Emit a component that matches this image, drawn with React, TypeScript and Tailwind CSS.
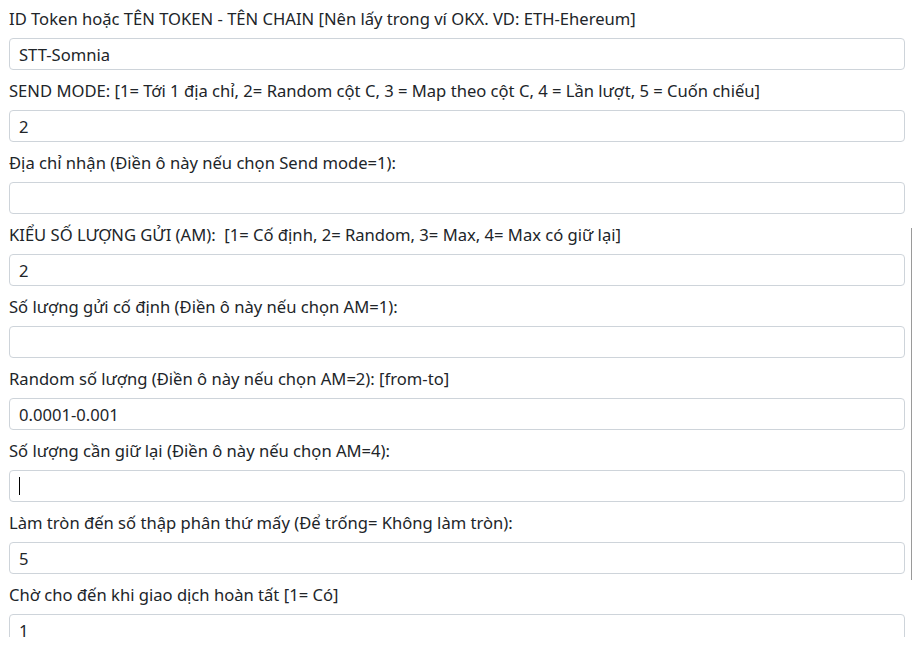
import React from "react";

const fields: { label: string; value: string; caret?: boolean }[] = [
  { label: "ID Token hoặc TÊN TOKEN - TÊN CHAIN [Nên lấy trong ví OKX. VD: ETH-Ehereum]", value: "STT-Somnia" },
  { label: "SEND MODE: [1= Tới 1 địa chỉ, 2= Random cột C, 3 = Map theo cột C, 4 = Lần lượt, 5 = Cuốn chiếu]", value: "2" },
  { label: "Địa chỉ nhận (Điền ô này nếu chọn Send mode=1):", value: "" },
  { label: "KIỂU SỐ LƯỢNG GỬI (AM):\u00a0 [1= Cố định, 2= Random, 3= Max, 4= Max có giữ lại]", value: "2" },
  { label: "Số lượng gửi cố định (Điền ô này nếu chọn AM=1):", value: "" },
  { label: "Random số lượng (Điền ô này nếu chọn AM=2): [from-to]", value: "0.0001-0.001" },
  { label: "Số lượng cần giữ lại (Điền ô này nếu chọn AM=4):", value: "", caret: true },
  { label: "Làm tròn đến số thập phân thứ mấy (Để trống= Không làm tròn):", value: "5" },
  { label: "Chờ cho đến khi giao dịch hoàn tất [1= Có]", value: "1" },
];

export default function App() {
  return (
    <div
      className="relative w-[912px] h-[652px] bg-white overflow-hidden"
      style={{ fontFamily: '"Segoe UI", "Noto Sans", sans-serif' }}
    >
      <div className="h-[637px] overflow-hidden pt-[7px] pl-[9px] pr-[7px]">
        {fields.map((f, i) => (
          <div key={i} className="mb-[9px]">
            <div className="text-[16.6px] leading-[24px] text-[#212529] mb-[7px] whitespace-nowrap">{f.label}</div>
            <div className="relative">
              <input
                readOnly
                defaultValue={f.value}
                className="block w-full h-[32px] rounded-[4px] border border-[#ced4da] bg-white px-[9px] text-[16.6px] text-[#212529] outline-none"
                style={{ fontFamily: '"Segoe UI", "Noto Sans", sans-serif' }}
              />
              {f.caret && <div className="absolute left-[10px] top-[7px] w-px h-[18px] bg-black" />}
            </div>
          </div>
        ))}
      </div>
      <div className="absolute left-[911px] top-[228px] w-px h-[352px] bg-[#9a9a9a]" />
    </div>
  );
}
